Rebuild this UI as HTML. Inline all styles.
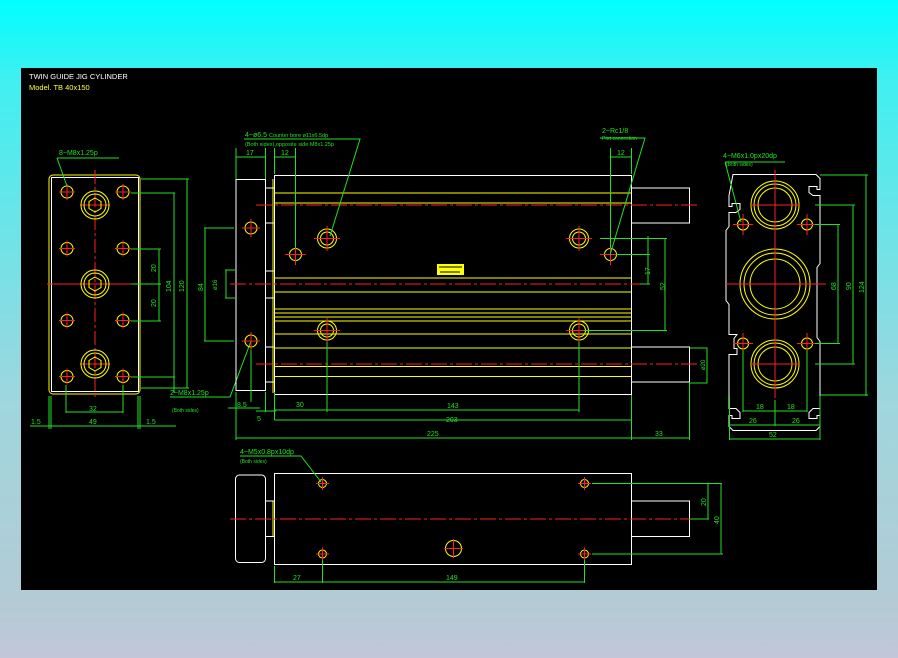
<!DOCTYPE html>
<html><head><meta charset="utf-8"><style>
html,body{margin:0;padding:0;width:898px;height:658px;overflow:hidden;background:linear-gradient(to bottom,#00ffff 0px,#40f0f0 80px,#9fd6de 400px,#b3cbd5 600px,#c2c6d8 658px);}
svg{position:absolute;left:0;top:0}
text{font-family:"Liberation Sans",sans-serif}
</style></head><body>
<svg width="898" height="658" viewBox="0 0 898 658" xmlns="http://www.w3.org/2000/svg">
<rect x="21" y="68" width="856" height="522" fill="#000"/>
<text x="29" y="79" fill="#fff" font-size="7.5">TWIN GUIDE JIG CYLINDER</text>
<text x="29" y="90" fill="#ffff40" font-size="7.5">Model. TB 40x150</text>

<g fill="none" stroke-width="1">
<!-- LEFT VIEW -->
<rect x="49" y="175" width="91" height="219" rx="4" stroke="#ffff00"/>
<rect x="51.5" y="177.5" width="87" height="214" stroke="#fff"/>
<g stroke="#ff2020">
<line x1="95" y1="170" x2="95" y2="400" stroke-dasharray="14,3,3,3"/>
<line x1="47" y1="284" x2="145" y2="284"/>
<line x1="80" y1="205" x2="110" y2="205"/><line x1="80" y1="364" x2="110" y2="364"/>
</g>
<g stroke="#ffff00">
<circle cx="95" cy="205" r="14"/><circle cx="95" cy="205" r="11"/>
<circle cx="95" cy="284" r="14"/><circle cx="95" cy="284" r="11"/>
<circle cx="95" cy="364" r="14"/><circle cx="95" cy="364" r="11"/>
<polygon points="95,198 101,201.5 101,208.5 95,212 89,208.5 89,201.5"/>
<polygon points="95,277 101,280.5 101,287.5 95,291 89,287.5 89,280.5"/>
<polygon points="95,357 101,360.5 101,367.5 95,371 89,367.5 89,360.5"/>
</g>
<g stroke="#ffff00">
<circle cx="67" cy="192" r="6"/><circle cx="123" cy="192" r="6"/>
<circle cx="67" cy="248.5" r="6"/><circle cx="123" cy="248.5" r="6"/>
<circle cx="67" cy="320.5" r="6"/><circle cx="123" cy="320.5" r="6"/>
<circle cx="67" cy="376.5" r="6"/><circle cx="123" cy="376.5" r="6"/>
</g>
<g stroke="#ff2020">
<path d="M59 192h16M67 184v16M115 192h16M123 184v16M59 248.5h16M67 240.5v16M115 248.5h16M123 240.5v16M59 320.5h16M67 312.5v16M115 320.5h16M123 312.5v16M59 376.5h16M67 368.5v16M115 376.5h16M123 376.5v0M123 368.5v16"/>
</g>
<g stroke="#22e022">
<path d="M57 158h62M57 158l10 28"/>
<path d="M141 179h48M187 179v209M141 388h48"/>
<path d="M131 193h44M174 193v200M131 377h44"/>
<path d="M131 249h30M159 249v72M131 321h30M131 284h30"/>
<path d="M66 385v28M123 385v28M66 412h57"/>
<path d="M49 396v33M140 396v33M30 426h146M51 396v33M138 396v33"/>
<!-- 84 dim -->
<path d="M204 228h30M204 341h30M205 228v113"/>
<path d="M225 270h10M225 298h10M226 270v28"/>
<path d="M170 397h60l21-56"/>
</g>
</g>
<g fill="#22e022" font-size="7">
<text x="59" y="155">8−M8x1.25p</text>
<text x="89" y="411">32</text>
<text x="89" y="424">49</text>
<text x="31" y="424">1.5</text>
<text x="146" y="424">1.5</text>
<text x="170" y="395">2−M8x1.25p</text>
<text x="172" y="412" font-size="5">(Both sides)</text>
<g font-size="7">
<text transform="translate(156,272) rotate(-90)">20</text>
<text transform="translate(156,307) rotate(-90)">20</text>
<text transform="translate(171,292) rotate(-90)">104</text>
<text transform="translate(184,292) rotate(-90)">120</text>
<text transform="translate(203,291) rotate(-90)">84</text>
<text transform="translate(217,290) rotate(-90)" font-size="6">ø16</text>
</g>
</g>

<!-- FRONT VIEW -->
<g fill="none" stroke-width="1">
<rect x="236" y="179.5" width="29.5" height="211" stroke="#fff"/>
<rect x="274.5" y="175.5" width="357" height="219" stroke="#fff"/>
<path stroke="#fff" d="M265.5 188h9M265.5 223h9M265.5 271h9M265.5 298h9M265.5 347h9M265.5 382h9"/>
<path stroke="#fff" d="M631.5 188h58v35h-58M631.5 347h58v35h-58"/>
<path stroke="#ffff00" d="M274.5 193h357M274.5 203h357M274.5 278h357M274.5 292h357M274.5 309h357M274.5 313h357M274.5 317h357M274.5 321h357M274.5 334h357M274.5 348h357M274.5 366.5h357M274.5 376.5h357"/>
<path stroke="#ffff00" d="M273 179v214"/>
<g stroke="#ff2020" stroke-dasharray="16,3,3,3">
<line x1="256" y1="205" x2="700" y2="205"/>
<line x1="230" y1="284" x2="641" y2="284"/>
<line x1="256" y1="364" x2="700" y2="364"/>
</g>
<g stroke="#ffff00">
<circle cx="327" cy="238.5" r="9.5"/><circle cx="327" cy="238.5" r="6.5"/>
<circle cx="579" cy="238.5" r="9.5"/><circle cx="579" cy="238.5" r="6.5"/>
<circle cx="327" cy="330.5" r="9.5"/><circle cx="327" cy="330.5" r="6.5"/>
<circle cx="579" cy="330.5" r="9.5"/><circle cx="579" cy="330.5" r="6.5"/>
<circle cx="295.5" cy="254.5" r="6"/><circle cx="610.5" cy="254.5" r="6"/>
<circle cx="251" cy="228" r="6"/><circle cx="251" cy="341" r="6"/>
</g>
<path stroke="#ff2020" d="M314 238.5h26M327 226v25M566 238.5h26M579 226v25M314 330.5h26M327 318v25M566 330.5h26M579 318v25M285 254.5h21M295.5 244v21M600 254.5h21M610.5 244v21M242 228h18M251 219v18M242 341h18M251 332v18"/>
<rect x="437" y="264" width="27" height="11" fill="#ffff00" stroke="none"/>
<path stroke="#000" d="M439 267h23M440 272h20"/>
<g stroke="#22e022">
<path d="M236 148v31M265.5 148v31M236 157h29.5M274.5 148v26M295.5 148v100M274.5 157h21M610.5 148v100M631.5 148v26M610.5 157h21"/>
<path d="M244 139h116l-30 97M600 138h45l-35 117"/>
<path d="M616 254.5h34M648 236v48M600 238.5h67M665 238.5v92M584 330.5h83M640 284h10"/>
<path d="M236 392v48M251 350v52M228 408h32M265.5 392v20M256 411h20M274.5 392v28M327 342v70M579 342v70M274.5 410h305M274.5 420h357M631.5 395v45M236 438h453M689.5 382v58M689.5 348h18M707 348v35M689.5 383h18"/>
</g>
</g>
<g fill="#22e022" font-size="7">
<text x="245" y="137">4−ø6.5  <tspan font-size="5.5">Counter bore ø11x6.5dp</tspan></text>
<text x="245" y="146" font-size="5.5">(Both sides),opposite side M8x1.25p</text>
<text x="246" y="155">17</text>
<text x="281" y="155">12</text>
<text x="602" y="133">2−Rc1/8</text>
<text x="602" y="140" font-size="5">Port connection</text>
<text x="617" y="155">12</text>
<text x="237" y="407">8.5</text>
<text x="257" y="421">5</text>
<text x="296" y="407">30</text>
<text x="447" y="408">143</text>
<text x="446" y="422">203</text>
<text x="427" y="436">225</text>
<text x="655" y="436">33</text>
<text transform="translate(650,275) rotate(-90)">17</text>
<text transform="translate(665,290) rotate(-90)">52</text>
<text transform="translate(705,370) rotate(-90)" font-size="6">ø20</text>
</g>

<!-- RIGHT VIEW -->
<g fill="none" stroke-width="1">
<path stroke="#fff" d="M733 174.5h83l4 4v11h-3v-3h-8v6l4 3h7v68l-3 4v70l3 4v67h-7l-4 4v6h8v-3h3v11l-4 4h-83l-4-4v-11h3v3h8v-6l-4-4h-7v-54h8v-6h-3v-10l3-4h-8v-30l-3-4v-70l3-4v-14h7l4-3v-6h-8v3h-3v-11z"/>
<g stroke="#ffff00">
<circle cx="775" cy="205" r="24"/><circle cx="775" cy="205" r="21"/><circle cx="775" cy="205" r="17"/>
<circle cx="775" cy="284" r="35"/><circle cx="775" cy="284" r="31"/><circle cx="775" cy="284" r="25"/>
<circle cx="775" cy="364" r="24"/><circle cx="775" cy="364" r="21"/><circle cx="775" cy="364" r="17"/>
<circle cx="743" cy="224.5" r="5.5"/><circle cx="807" cy="224.5" r="5.5"/>
<circle cx="743" cy="343.5" r="5.5"/><circle cx="807" cy="343.5" r="5.5"/>
</g>
<path stroke="#ff2020" d="M775 170v228M750 205h50M726 284h100M750 364h50M733 224.5h20M743 214v21M797 224.5h20M807 214v21M733 343.5h20M743 333v21M797 343.5h20M807 333v21"/>
<g stroke="#22e022">
<path d="M725 162h60M725 162l16 60"/>
<path d="M820 175h48M866 175v221M820 395h48"/>
<path d="M815 205h40M853 205v159M815 364h40"/>
<path d="M815 224.5h25M838 224.5v119M815 343.5h25"/>
<path d="M743 350v62M807 350v62M743 411h64M775 400v26M729.5 396v44M820 396v44M729.5 425h91M729.5 439h91"/>
</g>
</g>
<g fill="#22e022" font-size="7">
<text x="723" y="158">4−M6x1.0px20dp</text>
<text x="726" y="166" font-size="5">(Both sides)</text>
<text transform="translate(836,290) rotate(-90)">68</text>
<text transform="translate(851,290) rotate(-90)">90</text>
<text transform="translate(864,293) rotate(-90)">124</text>
<text x="756" y="409">18</text><text x="787" y="409">18</text>
<text x="749" y="423">26</text><text x="792" y="423">26</text>
<text x="769" y="437">52</text>
</g>

<!-- BOTTOM VIEW -->
<g fill="none" stroke-width="1">
<rect x="235.5" y="475" width="30" height="87.5" rx="4" stroke="#fff"/>
<rect x="274.5" y="473.5" width="357" height="91" stroke="#fff"/>
<path stroke="#fff" d="M265.5 501h9M265.5 536.5h9M631.5 501h58v35.5h-58"/>
<path stroke="#ffff00" d="M273 501v35.5"/>
<line x1="230" y1="519" x2="700" y2="519" stroke="#ff2020" stroke-dasharray="16,3,3,3"/>
<g stroke="#ffff00">
<circle cx="322.5" cy="483.5" r="4"/><circle cx="584.5" cy="483.5" r="4"/>
<circle cx="322.5" cy="554" r="4"/><circle cx="584.5" cy="554" r="4"/>
<circle cx="453.5" cy="548.5" r="8"/>
</g>
<path stroke="#ff2020" d="M316 483.5h13M322.5 477v13M578 483.5h13M584.5 477v13M316 554h13M322.5 547.5v13M578 554h13M584.5 547.5v13M444 548.5h19M453.5 539v19"/>
<g stroke="#22e022">
<path d="M240 456h61l20 26"/>
<path d="M592 483.5h130M708 483.5v36M592 554h131M721 483.5v71M690 519h19"/>
<path d="M274.5 566v17M322.5 560v23M584.5 560v23M274.5 582h310"/>
</g>
</g>
<g fill="#22e022" font-size="7">
<text x="240" y="454">4−M5x0.8px10dp</text>
<text x="240" y="463" font-size="5">(Both sides)</text>
<text x="293" y="580">27</text>
<text x="446" y="580">149</text>
<text transform="translate(706,506) rotate(-90)">20</text>
<text transform="translate(719,524) rotate(-90)">40</text>
</g>
</svg>
</body></html>
